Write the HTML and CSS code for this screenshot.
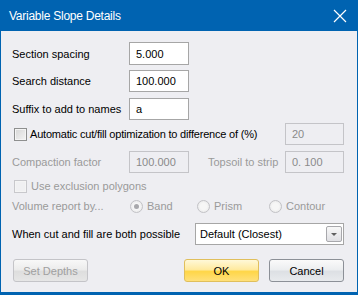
FILE: index.html
```html
<!DOCTYPE html>
<html lang="en">
<head>
    <meta charset="UTF-8">
    <title>Variable Slope Details</title>
    <link rel="stylesheet" href="styles.css">
</head>
<body>
    <div class="window">
        <div class="titlebar">
            <span class="title">Variable Slope Details</span>
            <svg class="close" width="14" height="14" viewBox="0 0 14 14">
                <path d="M1 1 L13 13 M13 1 L1 13" stroke="#fff" stroke-width="1.2" fill="none"/>
            </svg>
        </div>
        <div class="content">
            <div class="row r1">
                <span class="label">Section spacing</span>
                <div class="input">5.000</div>
            </div>
            <div class="row r2">
                <span class="label">Search distance</span>
                <div class="input">100.000</div>
            </div>
            <div class="row r3">
                <span class="label">Suffix to add to names</span>
                <div class="input">a</div>
            </div>
            <div class="row r4">
                <span class="check"></span>
                <span class="check-text narrow">Automatic cut/fill optimization to difference of (%)</span>
                <div class="input disabled right">20</div>
            </div>
            <div class="row r5">
                <span class="label gray">Compaction factor</span>
                <div class="input disabled">100.000</div>
                <span class="topsoil gray">Topsoil to strip</span>
                <div class="input disabled right">0. 100</div>
            </div>
            <div class="row r6">
                <span class="check off"></span>
                <span class="check-text gray">Use exclusion polygons</span>
            </div>
            <div class="row r7">
                <span class="label gray">Volume report by...</span>
                <span class="radio on"></span><span class="radio-text band">Band</span>
                <span class="radio"></span><span class="radio-text prism">Prism</span>
                <span class="radio"></span><span class="radio-text">Contour</span>
            </div>
            <div class="row r8">
                <span class="label wide">When cut and fill are both possible</span>
                <div class="select">
                    <span>Default (Closest)</span>
                    <span class="select-btn"><i></i></span>
                </div>
            </div>
            <div class="buttons">
                <button class="btn disabled">Set Depths</button>
                <span class="spacer"></span>
                <button class="btn ok">OK</button>
                <button class="btn">Cancel</button>
            </div>
        </div>
    </div>
</body>
</html>
```
FILE: styles.css
```css
body {
    margin: 0;
    font-family: "Liberation Sans", Arial, sans-serif;
    font-size: 11px;
    color: #000;
}
.window {
    width: 358px;
    height: 295px;
    box-sizing: border-box;
    background-color: #eeeef2;
    border: 1px solid #0063b1;
    border-top: none;
    border-bottom-width: 3px;
}
.titlebar {
    height: 31px;
    margin: 0 -1px;
    background-color: #0063b1;
    display: flex;
    align-items: center;
    padding: 0 11px 0 9px;
}
.title {
    color: #fff;
    font-size: 12px;
    letter-spacing: -0.25px;
    flex: 1;
}
.close {
    display: block;
}
.content {
    padding: 0 13px 0 11px;
}
.row {
    display: flex;
    align-items: center;
    height: 22px;
}
.r1 { margin-top: 11px; height: 23px; }
.r2 { margin-top: 5px; }
.r3 { margin-top: 6px; }
.r4 { margin-top: 3px; }
.r5 { margin-top: 6px; }
.r6 { margin-top: 3px; height: 20px; }
.r7 { height: 20px; }
.r8 { margin-top: 7px; }
.label {
    width: 117px;
}
.label.wide {
    width: 183px;
}
.gray {
    color: #9a9a9a;
}
.input {
    width: 60px;
    height: 100%;
    box-sizing: border-box;
    background: #fff;
    border: 1px solid #a6a6a6;
    padding: 0 0 0 6px;
    display: flex;
    align-items: center;
}
.input.disabled {
    background: #eeeef2;
    border-color: #c4c4c8;
    color: #8a8a8a;
}
.input.right {
    margin-left: auto;
    width: 59px;
}
.topsoil {
    margin-left: 19px;
}
.check {
    width: 13px;
    height: 13px;
    box-sizing: border-box;
    margin-left: 2px;
    border: 1px solid #8e8f8f;
    background: linear-gradient(135deg, #d6d6d6, #f4f4f4);
    box-shadow: inset 0 0 0 1px #f4f4f4;
}
.check.off {
    border-color: #c8c8cc;
    background: #f0f0f2;
}
.check-text {
    margin-left: 4px;
}
.check-text.narrow {
    margin-left: 3px;
    letter-spacing: -0.2px;
}
.radio {
    width: 13px;
    height: 13px;
    box-sizing: border-box;
    border-radius: 50%;
    border: 1px solid #c2c2c6;
    background: radial-gradient(circle, #f6f6f6 40%, #e4e4e6);
    margin-left: 1px;
    position: relative;
}
.radio.on::after {
    content: "";
    position: absolute;
    left: 3px;
    top: 3px;
    width: 5px;
    height: 5px;
    border-radius: 50%;
    background: #a8a8ac;
}
.radio-text {
    color: #9a9a9a;
    margin-left: 4px;
}
.radio-text.band {
    width: 49px;
}
.radio-text.prism {
    width: 54px;
}
.select {
    width: 149px;
    height: 100%;
    box-sizing: border-box;
    background: #fff;
    border: 1px solid #a6a6a6;
    display: flex;
    align-items: center;
    padding: 0 1px 0 4px;
}
.select span:first-child {
    flex: 1;
}
.select-btn {
    width: 16px;
    height: 16px;
    box-sizing: border-box;
    border: 1px solid #a8a8ac;
    border-radius: 2px;
    background: linear-gradient(#f8f8f8, #e0e0e4);
    display: flex;
    align-items: center;
    justify-content: center;
}
.select-btn i {
    width: 0;
    height: 0;
    border-left: 3px solid transparent;
    border-right: 3px solid transparent;
    border-top: 3px solid #606060;
}
.buttons {
    display: flex;
    margin-top: 14px;
    padding-left: 1px;
}
.spacer {
    flex: 1;
}
.btn {
    width: 75px;
    height: 23px;
    font-family: "Liberation Sans", Arial, sans-serif;
    font-size: 11px;
    color: #000;
    border: 1px solid #8c9097;
    border-radius: 3px;
    background: linear-gradient(#fafafa 0%, #eceef0 45%, #dde0e4 55%, #e8eaed 100%);
    padding: 0;
    margin-left: 10px;
}
.btn:first-child {
    margin-left: 0;
}
.btn.ok {
    border-color: #e0bf5c;
    background: linear-gradient(#fff8d8 0%, #ffeaa0 45%, #ffd648 55%, #ffe07a 100%);
}
.btn.disabled {
    color: #a0a0a0;
    border-color: #c4c4c8;
    background: linear-gradient(#f8f8f8 0%, #ececec 45%, #dedede 55%, #e6e6e6 100%);
}
```
